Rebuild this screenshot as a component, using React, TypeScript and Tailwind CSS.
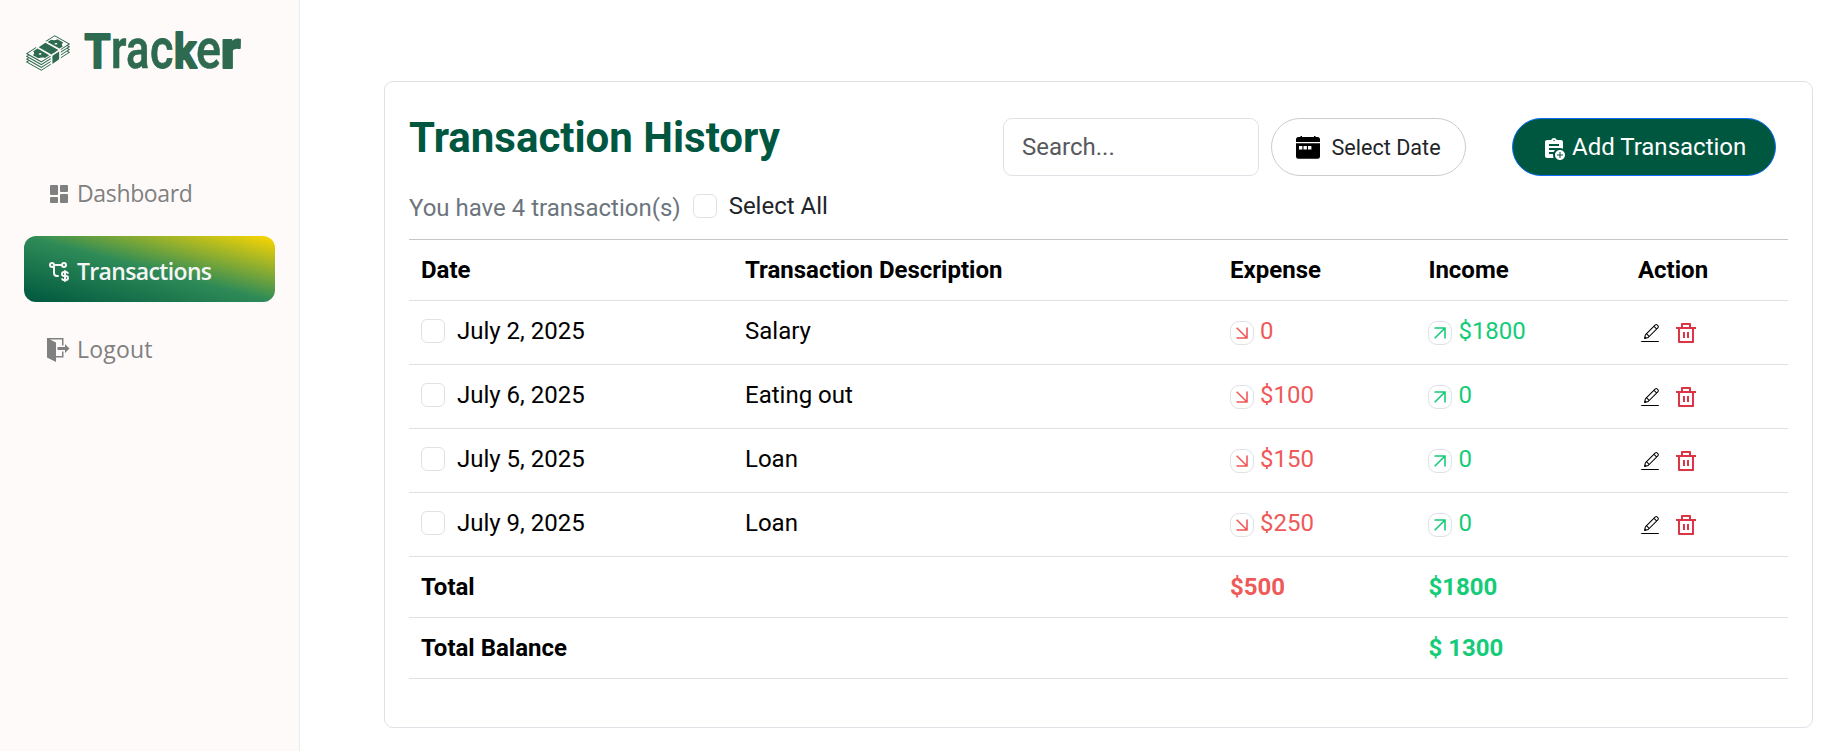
import type { ReactNode } from "react";
import { GiMoneyStack } from "react-icons/gi";
import { BiSolidDashboard } from "react-icons/bi";
import { TbTransactionDollar } from "react-icons/tb";
import { ImExit } from "react-icons/im";
import { MdAssignmentAdd } from "react-icons/md";
import { RiDeleteBinLine } from "react-icons/ri";
import { CiEdit } from "react-icons/ci";

type Transaction = {
  date: string;
  description: string;
  expense: string;
  income: string;
};

const transactions: Transaction[] = [
  { date: "July 2, 2025", description: "Salary", expense: "0", income: "$1800" },
  { date: "July 6, 2025", description: "Eating out", expense: "$100", income: "0" },
  { date: "July 5, 2025", description: "Loan", expense: "$150", income: "0" },
  { date: "July 9, 2025", description: "Loan", expense: "$250", income: "0" },
];

const columns = "grid grid-cols-[324px_485px_198.4px_209.6px_1fr] border-b border-[#dee2e6]";

type Glyph = { char: string; x: number; size: number; width: number; stroke: number; weight: number };

const wordmark: Glyph[] = [
  { char: "T", x: 4.5, size: 48.5, width: 26, stroke: 2, weight: 700 },
  { char: "r", x: 31, size: 56, width: 15.5, stroke: 0.6, weight: 600 },
  { char: "a", x: 46, size: 56, width: 23.5, stroke: 0.7, weight: 500 },
  { char: "c", x: 70, size: 56, width: 23.5, stroke: 0.8, weight: 500 },
  { char: "k", x: 94, size: 49, width: 22.5, stroke: 2, weight: 700 },
  { char: "e", x: 116, size: 56, width: 25, stroke: 0.6, weight: 500 },
  { char: "r", x: 141, size: 54, width: 19.5, stroke: 2, weight: 900 },
];

function Wordmark() {
  return (
    <svg
      width="170"
      height="90"
      viewBox="0 0 170 90"
      className="-mt-[17px] -mb-[21px] -ml-1 fill-[#2d6a4f] stroke-[#2d6a4f] font-['Roboto',sans-serif]"
    >
      {wordmark.map((g, i) => (
        <text
          key={i}
          x={g.x}
          y="60"
          fontSize={g.size}
          fontWeight={g.weight}
          strokeWidth={g.stroke}
          strokeLinejoin="round"
          textLength={g.width}
          lengthAdjust="spacingAndGlyphs"
        >
          {g.char}
        </text>
      ))}
    </svg>
  );
}

function CalendarIcon() {
  return (
    <svg width="24" height="23" viewBox="0 0 24 23" className="shrink-0">
      <path d="M4.500 0h1.500v1h12V0h1.500v1h2A2.500 2.500 0 0 1 24 3.500V6H0V3.500A2.500 2.500 0 0 1 2.500 1h2z" fill="#000" />
      <path d="M0 7.200h24V20.500A2.200 2.200 0 0 1 21.800 22.700H2.200A2.200 2.200 0 0 1 0 20.500z" fill="#000" />
      <path d="M3 10h3.400v3.400H3zM7.500 10h3.400v3.400H7.500zM12 10h3.400v3.400H12z" fill="#fff" />
    </svg>
  );
}

function ArrowBadge({ up }: { up?: boolean }) {
  return (
    <span className="flex size-6 items-center justify-center rounded-[9px] border border-[#dee2e6]">
      <svg width="12" height="12" viewBox="0 0 12 12" fill="none" stroke="currentColor" strokeWidth="1.6">
        {up ? <path d="M0.500 1h10.500v10.500M11 1L0.700 11.300" /> : <path d="M11 0.500v10.500H0.500M11 11L0.700 0.700" />}
      </svg>
    </span>
  );
}

function Checkbox() {
  return <span className="block size-6 shrink-0 rounded-[6px] border border-[#dee2e6] bg-white" />;
}

function NavItem({ icon, label, active }: { icon: ReactNode; label: ReactNode; active?: boolean }) {
  return (
    <a
      className={
        active
          ? "flex h-[66px] items-center rounded-[12px] bg-[linear-gradient(to_top_right,#00573f,#2e8b57,#ffd700)] pl-[23px] text-[#f5f5f5]"
          : "flex h-[66px] items-center rounded-[12px] pl-[23px] text-[#808080]"
      }
    >
      <span className="mt-[6px]">{icon}</span>
      <span className="mt-[3px] ml-[6px]">{label}</span>
    </a>
  );
}

export default function App() {
  return (
    <div className="flex h-[751px] w-full bg-white font-['Roboto',sans-serif] text-[24px] leading-[36px] text-black">
      <aside className="w-[300px] shrink-0 border-r border-[#e9ecef] bg-[#fffafa]">
        <div className="flex items-start pt-[25px] pl-6">
          <GiMoneyStack size={48} className="mt-1 text-[#2d6a4f]" />
          <div className="ml-3">
            <Wordmark />
          </div>
        </div>
        <nav className="mt-[81px] flex flex-col gap-3 px-6 font-['Open_Sans','Noto_Sans',sans-serif]">
          <NavItem
            icon={<BiSolidDashboard size={24} />}
            label={<span className="text-[23px] tracking-[-0.35px]">Dashboard</span>}
          />
          <NavItem
            active
            icon={<TbTransactionDollar size={24} />}
            label={<span className="text-[23px] font-semibold tracking-[-0.65px]">Transactions</span>}
          />
          <NavItem icon={<ImExit size={24} />} label={<span className="text-[23px] tracking-[0.2px]">Logout</span>} />
        </nav>
      </aside>

      <main className="flex-1 pt-[81px] pr-[21px] pl-[84px]">
        <section className="h-[647px] rounded-[9px] border border-[#dee2e6] px-6">
          <div className="flex h-[157px]">
            <div className="flex-1">
              <h1 className="mt-[30px] text-[42px] leading-[52px] font-bold text-[#00573f]">Transaction History</h1>
              <div className="mt-[22px] flex items-center">
                <span className="mt-1 text-[#6c757d]">You have 4 transaction(s)</span>
                <div className="ml-3 flex items-center gap-3">
                  <Checkbox />
                  <span className="text-[#212529]">Select All</span>
                </div>
              </div>
            </div>
            <div className="mt-9 mr-3 flex h-[58px] items-stretch">
              <div className="flex w-[256px] items-center rounded-[9px] border border-[#dee2e6] px-[18px] text-[#58595c]">
                Search...
              </div>
              <button className="ml-3 flex w-[195px] items-center rounded-full border border-[#cccccc] pl-6 text-[#212529]">
                <CalendarIcon />
                <span className="mt-px ml-[11.5px] text-[21.6px]">Select Date</span>
              </button>
              <button className="ml-[46px] flex w-[264px] items-center rounded-full border border-[#0d6efd] bg-[#00573f] pl-[29px] text-white">
                <MdAssignmentAdd size={24} className="mt-1" />
                <span className="ml-[6px]">Add Transaction</span>
              </button>
            </div>
          </div>

          <div className="border-t border-[#c4c7ca]">
            <div className={`${columns} h-[61px] items-center font-bold`}>
              <span className="pl-3">Date</span>
              <span className="pl-3">Transaction Description</span>
              <span className="pl-3">Expense</span>
              <span className="pl-3">Income</span>
              <span className="pl-3">Action</span>
            </div>
            {transactions.map((t) => (
              <div key={t.date} className={`${columns} h-16 items-center pb-[3px]`}>
                <div className="flex items-center gap-3 pl-3">
                  <Checkbox />
                  <span>{t.date}</span>
                </div>
                <span className="pl-3">{t.description}</span>
                <div className="flex items-center gap-[6px] pl-3 text-[#ee5a5a]">
                  <span className="mt-1">
                    <ArrowBadge />
                  </span>
                  <span>{t.expense}</span>
                </div>
                <div className="flex items-center gap-[6px] pl-3 text-[#14cc78]">
                  <span className="mt-1">
                    <ArrowBadge up />
                  </span>
                  <span>{t.income}</span>
                </div>
                <div className="mt-1 flex items-center gap-3 pl-3">
                  <CiEdit size={24} />
                  <RiDeleteBinLine size={24} className="text-[#dc3545]" />
                </div>
              </div>
            ))}
            <div className={`${columns} h-[61px] items-center font-bold`}>
              <span className="pl-3">Total</span>
              <span />
              <span className="pl-3 text-[#ee5a5a]">$500</span>
              <span className="pl-3 text-[#14cc78]">$1800</span>
              <span />
            </div>
            <div className={`${columns} h-[61px] items-center font-bold`}>
              <span className="pl-3">Total Balance</span>
              <span />
              <span />
              <span className="pl-3 text-[#14cc78]">$ 1300</span>
              <span />
            </div>
          </div>
        </section>
      </main>
    </div>
  );
}
